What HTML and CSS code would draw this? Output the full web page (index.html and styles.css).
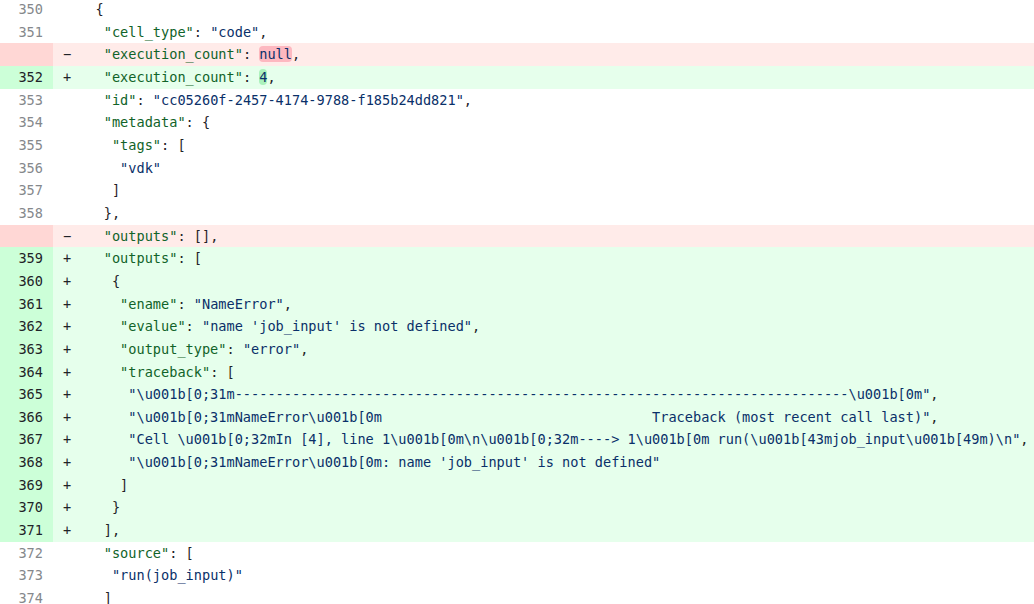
FILE: index.html
```html
<!DOCTYPE html>
<html>
<head>
<meta charset="utf-8">
<link rel="stylesheet" href="styles.css">
</head>
<body>
<div class="diff">
  <div class="row"><span class="num">350</span><span class="code"><span class="mk"> </span>  {</span></div>
  <div class="row"><span class="num">351</span><span class="code"><span class="mk"> </span>   <span class="k">"cell_type"</span>: <span class="s">"code"</span>,</span></div>
  <div class="row del"><span class="num"></span><span class="code"><span class="mk">−</span>   <span class="k">"execution_count"</span>: <span class="x">null</span>,</span></div>
  <div class="row add"><span class="num">352</span><span class="code"><span class="mk">+</span>   <span class="k">"execution_count"</span>: <span class="x">4</span>,</span></div>
  <div class="row"><span class="num">353</span><span class="code"><span class="mk"> </span>   <span class="k">"id"</span>: <span class="s">"cc05260f-2457-4174-9788-f185b24dd821"</span>,</span></div>
  <div class="row"><span class="num">354</span><span class="code"><span class="mk"> </span>   <span class="k">"metadata"</span>: {</span></div>
  <div class="row"><span class="num">355</span><span class="code"><span class="mk"> </span>    <span class="k">"tags"</span>: [</span></div>
  <div class="row"><span class="num">356</span><span class="code"><span class="mk"> </span>     <span class="s">"vdk"</span></span></div>
  <div class="row"><span class="num">357</span><span class="code"><span class="mk"> </span>    ]</span></div>
  <div class="row"><span class="num">358</span><span class="code"><span class="mk"> </span>   },</span></div>
  <div class="row del"><span class="num"></span><span class="code"><span class="mk">−</span>   <span class="k">"outputs"</span>: [],</span></div>
  <div class="row add"><span class="num">359</span><span class="code"><span class="mk">+</span>   <span class="k">"outputs"</span>: [</span></div>
  <div class="row add"><span class="num">360</span><span class="code"><span class="mk">+</span>    {</span></div>
  <div class="row add"><span class="num">361</span><span class="code"><span class="mk">+</span>     <span class="k">"ename"</span>: <span class="s">"NameError"</span>,</span></div>
  <div class="row add"><span class="num">362</span><span class="code"><span class="mk">+</span>     <span class="k">"evalue"</span>: <span class="s">"name 'job_input' is not defined"</span>,</span></div>
  <div class="row add"><span class="num">363</span><span class="code"><span class="mk">+</span>     <span class="k">"output_type"</span>: <span class="s">"error"</span>,</span></div>
  <div class="row add"><span class="num">364</span><span class="code"><span class="mk">+</span>     <span class="k">"traceback"</span>: [</span></div>
  <div class="row add"><span class="num">365</span><span class="code"><span class="mk">+</span>      <span class="s">"\u001b[0;31m---------------------------------------------------------------------------\u001b[0m"</span>,</span></div>
  <div class="row add"><span class="num">366</span><span class="code"><span class="mk">+</span>      <span class="s">"\u001b[0;31mNameError\u001b[0m                                 Traceback (most recent call last)"</span>,</span></div>
  <div class="row add"><span class="num">367</span><span class="code"><span class="mk">+</span>      <span class="s">"Cell \u001b[0;32mIn [4], line 1\u001b[0m\n\u001b[0;32m----&gt; 1\u001b[0m run(\u001b[43mjob_input\u001b[49m)\n"</span>,</span></div>
  <div class="row add"><span class="num">368</span><span class="code"><span class="mk">+</span>      <span class="s">"\u001b[0;31mNameError\u001b[0m: name 'job_input' is not defined"</span></span></div>
  <div class="row add"><span class="num">369</span><span class="code"><span class="mk">+</span>     ]</span></div>
  <div class="row add"><span class="num">370</span><span class="code"><span class="mk">+</span>    }</span></div>
  <div class="row add"><span class="num">371</span><span class="code"><span class="mk">+</span>   ],</span></div>
  <div class="row"><span class="num">372</span><span class="code"><span class="mk"> </span>   <span class="k">"source"</span>: [</span></div>
  <div class="row"><span class="num">373</span><span class="code"><span class="mk"> </span>    <span class="s">"run(job_input)"</span></span></div>
  <div class="row"><span class="num">374</span><span class="code"><span class="mk"> </span>   ]</span></div>
</div>
</body>
</html>
```

FILE: styles.css
```css
html, body {
  margin: 0;
  padding: 0;
  background: #ffffff;
  overflow: hidden;
}

.diff {
  margin-top: -2px;
  font-family: "DejaVu Sans Mono", "Liberation Mono", monospace;
  font-size: 13.6px;
  color: #1f2328;
}

.row {
  display: grid;
  grid-template-columns: 53px 1fr;
  height: 22.66px;
  line-height: 22.66px;
}

.num {
  text-align: right;
  padding-right: 10px;
  color: #85888c;
}

.code {
  white-space: pre;
  padding-left: 10px;
}

.mk {
  display: inline-block;
  width: 1ch;
  margin-right: 8px;
}

.k { color: #116329; }
.s { color: #0a3069; }
.x { color: #0a3069; border-radius: 4px; }

.del .num { background: #ffd7d5; }
.del .code { background: #ffebe9; }
.del .x { background: #fdb8c0; }

.add .num { background: #ccffd8; color: #1f2328; }
.add .code { background: #e6ffec; }
.add .x { background: #abf2bc; }
```
